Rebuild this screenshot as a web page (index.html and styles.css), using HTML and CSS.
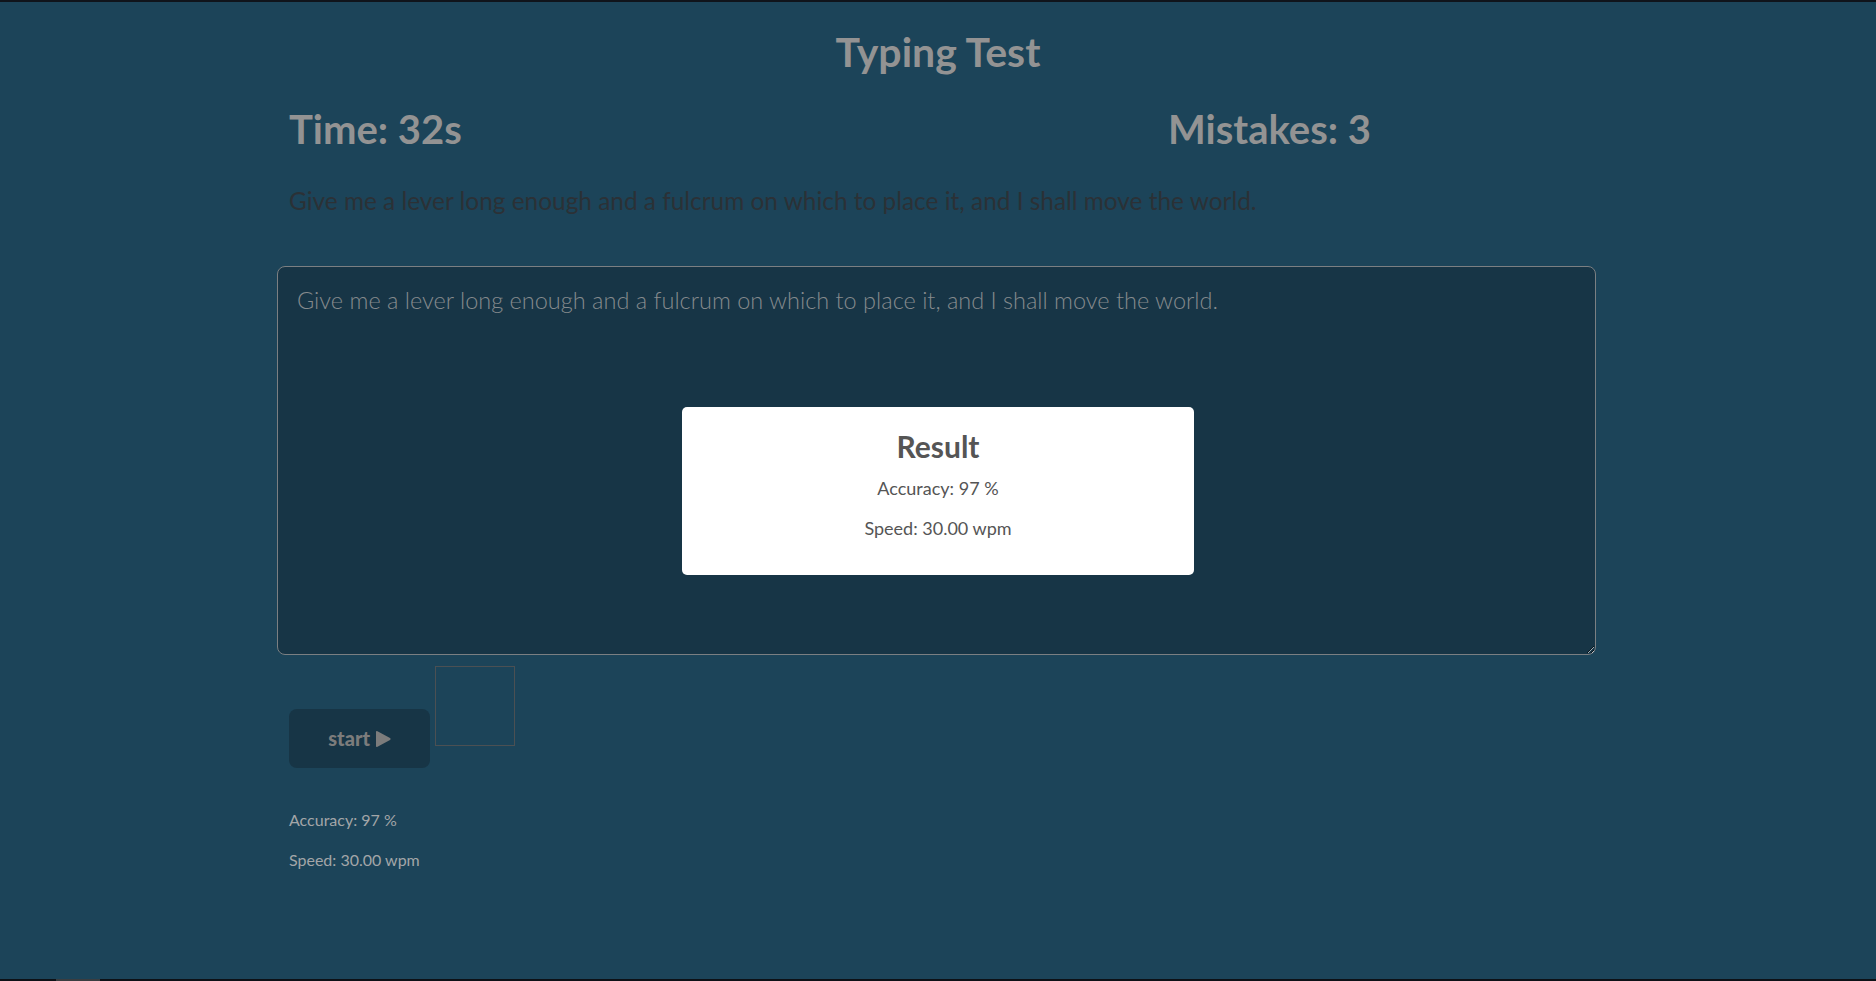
FILE: index.html
```html
<!DOCTYPE html>
<html lang="en">
<head>
<meta charset="utf-8">
<title>Typing Test</title>
<link rel="stylesheet" href="styles.css">
</head>
<body>
<div class="container">
  <h1 class="title">Typing Test</h1>
  <div class="stats">
    <h2 class="stat">Time: 32s</h2>
    <h2 class="stat">Mistakes: 3</h2>
  </div>
  <p class="quote">Give me a lever long enough and a fulcrum on which to place it, and I shall move the world.</p>
  <textarea class="typing-area" spellcheck="false">Give me a lever long enough and a fulcrum on which to place it, and I shall move the world.</textarea>
  <div class="controls">
    <button class="start-btn">start <svg class="play" viewBox="0 0 15 18" width="15" height="18"><path d="M1.5 1.2 Q0 0.3 0 2 V16 Q0 17.7 1.5 16.8 L14 10 Q15.2 9 14 8 Z" fill="currentColor"/></svg></button><div class="box"></div>
  </div>
  <p class="summary">Accuracy: 97 %</p>
  <p class="summary">Speed: 30.00 wpm</p>
</div>
<div class="result">
  <h3 class="result-title">Result</h3>
  <p class="result-line">Accuracy: 97 %</p>
  <p class="result-line">Speed: 30.00 wpm</p>
</div>
<div class="taskbar"><span class="taskbar-item"></span></div>
</body>
</html>
```
FILE: styles.css
```css
* { box-sizing: border-box; }
html, body { height: 100%; }
body {
  margin: 0;
  background: #1c4459;
  border-top: 2px solid #10141b;
  font-family: Lato, "Open Sans", sans-serif;
  overflow: hidden;
}
.container {
  width: 1322px;
  margin: 0 auto;
  padding: 0 12px;
}
.title {
  margin: 26px 0 0;
  font-size: 41px;
  line-height: 48px;
  font-weight: 700;
  color: #939393;
  text-align: center;
}
.stats {
  display: grid;
  grid-template-columns: 879px 1fr;
  margin: 0 -12px;
  padding-top: 29px;
}
.stat {
  margin: 0;
  padding: 0 12px;
  font-size: 40px;
  line-height: 48px;
  font-weight: 700;
  color: #939393;
}
.quote {
  margin: 30px 0 0;
  font-size: 24.4px;
  line-height: 36px;
  color: #2b3136;
}
.typing-area {
  display: block;
  width: calc(100% + 21px);
  margin: 47px -12px 0;
  height: 389px;
  padding: 15px 19px;
  background: #173546;
  border: 1px solid #7b7f82;
  border-radius: 8px;
  font-family: Lato, "Open Sans", sans-serif;
  font-size: 23.5px;
  font-weight: 300;
  line-height: 36px;
  color: #858a8d;
  outline: none;
}
.controls {
  margin-top: 11px;
  display: flex;
  align-items: baseline;
  gap: 5px;
}
.start-btn {
  width: 141px;
  height: 59px;
  border: none;
  border-radius: 8px;
  background: #173546;
  color: #7c7c7c;
  font-family: Lato, "Open Sans", sans-serif;
  font-size: 20px;
  font-weight: 900;
  padding: 0;
}
.play { vertical-align: -2px; margin-left: 1px; }
.box {
  width: 80px;
  height: 80px;
  border: 1px solid #4b5053;
}
.summary {
  margin: 16px 0;
  font-size: 16px;
  line-height: 24px;
  color: #a3a6a8;
}
.controls + .summary { margin-top: 40px; }
.result {
  position: fixed;
  left: 50%;
  top: 50%;
  transform: translate(-50%, -50%);
  width: 512px;
  height: 168px;
  padding: 21px 20px 19px;
  background: #ffffff;
  border-radius: 5px;
  text-align: center;
}
.result-title {
  margin: 0 0 12px;
  font-size: 30px;
  line-height: 36px;
  font-weight: 700;
  color: #555555;
}
.result-line {
  margin: 0 0 16px;
  font-size: 18px;
  line-height: 24px;
  color: #555555;
}
.taskbar {
  position: fixed;
  left: 0;
  right: 0;
  bottom: 0;
  height: 2px;
  background: #0d1116;
}
.taskbar-item {
  position: absolute;
  left: 56px;
  width: 44px;
  top: 0;
  bottom: 0;
  background: #3a3d40;
}
```
